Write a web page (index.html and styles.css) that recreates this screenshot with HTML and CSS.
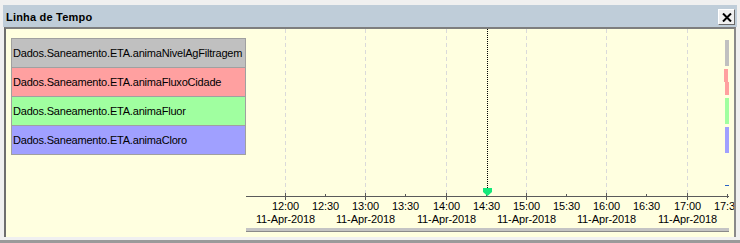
FILE: index.html
```html
<!DOCTYPE html>
<html>
<head>
<meta charset="utf-8">
<link rel="stylesheet" href="styles.css">
</head>
<body>
<div class="window">
  <div class="titlebar">
    <span class="title">Linha de Tempo</span>
    <button class="close" aria-label="Fechar">
      <svg width="10" height="9" viewBox="0 0 10 9"><path d="M1 0.5 L9 8.5 M9 0.5 L1 8.5" stroke="#000" stroke-width="2" fill="none"/></svg>
    </button>
  </div>
  <div class="content">
    <div class="tracks">
      <div class="track gray">Dados.Saneamento.ETA.animaNivelAgFiltragem</div>
      <div class="track pink">Dados.Saneamento.ETA.animaFluxoCidade</div>
      <div class="track green">Dados.Saneamento.ETA.animaFluor</div>
      <div class="track blue">Dados.Saneamento.ETA.animaCloro</div>
    </div>
    <svg class="timeline" width="488" height="208" viewBox="0 0 488 208">
      <g stroke="#dadada" stroke-width="1" stroke-dasharray="4 3">
        <line x1="39.5" y1="0" x2="39.5" y2="164"/>
        <line x1="119.5" y1="0" x2="119.5" y2="164"/>
        <line x1="200.5" y1="0" x2="200.5" y2="164"/>
        <line x1="280.5" y1="0" x2="280.5" y2="164"/>
        <line x1="360.5" y1="0" x2="360.5" y2="164"/>
        <line x1="441.5" y1="0" x2="441.5" y2="164"/>
      </g>
      <line x1="241.5" y1="0" x2="241.5" y2="159" stroke="#000" stroke-width="1" stroke-dasharray="1 1"/>
      <g stroke="#5a5a5a" stroke-width="1">
        <line x1="0" y1="167.5" x2="483" y2="167.5"/>
        <line x1="39.5" y1="164" x2="39.5" y2="171"/>
        <line x1="119.5" y1="164" x2="119.5" y2="171"/>
        <line x1="200.5" y1="164" x2="200.5" y2="171"/>
        <line x1="280.5" y1="164" x2="280.5" y2="171"/>
        <line x1="360.5" y1="164" x2="360.5" y2="171"/>
        <line x1="441.5" y1="164" x2="441.5" y2="171"/>
        <line x1="79.5" y1="165" x2="79.5" y2="167"/>
        <line x1="159.5" y1="165" x2="159.5" y2="167"/>
        <line x1="240.5" y1="165" x2="240.5" y2="167"/>
        <line x1="320.5" y1="165" x2="320.5" y2="167"/>
        <line x1="400.5" y1="165" x2="400.5" y2="167"/>
        <line x1="481.5" y1="165" x2="481.5" y2="169"/>
      </g>
      <polygon points="237,159 246,159 246,163 241.5,167 237,163" fill="#14e87a"/>
      <rect x="479" y="11" width="4" height="26" fill="#c0c0c0"/>
      <rect x="478" y="40" width="4" height="13" fill="#ffa0a0"/>
      <rect x="479" y="53" width="4" height="13" fill="#ffa0a0"/>
      <rect x="479" y="69" width="4" height="26" fill="#a0ffa0"/>
      <rect x="479" y="98" width="4" height="26" fill="#a0a0ff"/>
      <rect x="479" y="156" width="4" height="1" fill="#2a62c4"/>
      <g class="axis-text" text-anchor="middle">
        <text x="39.5" y="181">12:00</text>
        <text x="79.5" y="181">12:30</text>
        <text x="119.5" y="181">13:00</text>
        <text x="159.5" y="181">13:30</text>
        <text x="200.5" y="181">14:00</text>
        <text x="240.5" y="181">14:30</text>
        <text x="280.5" y="181">15:00</text>
        <text x="320.5" y="181">15:30</text>
        <text x="360.5" y="181">16:00</text>
        <text x="400.5" y="181">16:30</text>
        <text x="441.5" y="181">17:00</text>
        <text x="481.5" y="181">17:30</text>
        <text x="39.5" y="194">11-Apr-2018</text>
        <text x="119.5" y="194">11-Apr-2018</text>
        <text x="200.5" y="194">11-Apr-2018</text>
        <text x="280.5" y="194">11-Apr-2018</text>
        <text x="360.5" y="194">11-Apr-2018</text>
        <text x="441.5" y="194">11-Apr-2018</text>
      </g>
      <rect x="0" y="199" width="483" height="3" fill="#c4c4c4"/>
      <rect x="0" y="202" width="483" height="1" fill="#8a8a8a"/>
    </svg>
  </div>
</div>
</body>
</html>
```
FILE: styles.css
```css
html, body {
  margin: 0;
  padding: 0;
}
body {
  width: 740px;
  height: 243px;
  background: #f0f0f0;
  overflow: hidden;
  font-family: "Liberation Sans", Arial, sans-serif;
}
.window {
  box-sizing: border-box;
  width: 740px;
  height: 243px;
  padding: 5px 3px 3px 3px;
  border-bottom: 3px solid #9a9a9a;
  display: flex;
  flex-direction: column;
}
.titlebar {
  height: 22px;
  background: #bfcdd9;
  display: flex;
  align-items: center;
  justify-content: space-between;
  padding: 0 2px 0 3px;
}
.title {
  font-weight: bold;
  font-size: 11px;
  letter-spacing: 0.2px;
  color: #000;
  position: relative;
  top: 1px;
}
.close {
  box-sizing: border-box;
  width: 17px;
  height: 16px;
  padding: 0;
  margin: 0;
  background: #f0f0f0;
  border: 1px solid;
  border-color: #ffffff #6a6a6a #6a6a6a #ffffff;
  display: flex;
  align-items: center;
  justify-content: center;
  position: relative;
  top: 1px;
}
.close svg {
  display: block;
}
.content {
  box-sizing: border-box;
  height: 210px;
  margin: 0 1px;
  background: #ffffe0;
  border-top: 2px solid #7e7e7e;
  border-left: 2px solid #6e6e6e;
  border-right: 2px solid #8a8a8a;
  display: flex;
  align-items: flex-start;
}
.tracks {
  box-sizing: border-box;
  width: 235px;
  margin: 9px 0 0 5px;
  border: 1px solid #a0a0a0;
  display: flex;
  flex-direction: column;
  gap: 1px;
  background: #a0a0a0;
}
.track {
  height: 28px;
  line-height: 28px;
  padding-left: 1px;
  font-size: 11px;
  letter-spacing: -0.2px;
  color: #000;
  white-space: nowrap;
  overflow: hidden;
}
.gray { background: #c0c0c0; }
.pink { background: #ffa0a0; }
.green { background: #a0ffa0; }
.blue { background: #a0a0ff; }
.timeline {
  display: block;
  flex: none;
}
.axis-text text {
  font-family: "Liberation Sans", Arial, sans-serif;
  font-size: 11px;
  letter-spacing: -0.1px;
  fill: #000;
}
```
